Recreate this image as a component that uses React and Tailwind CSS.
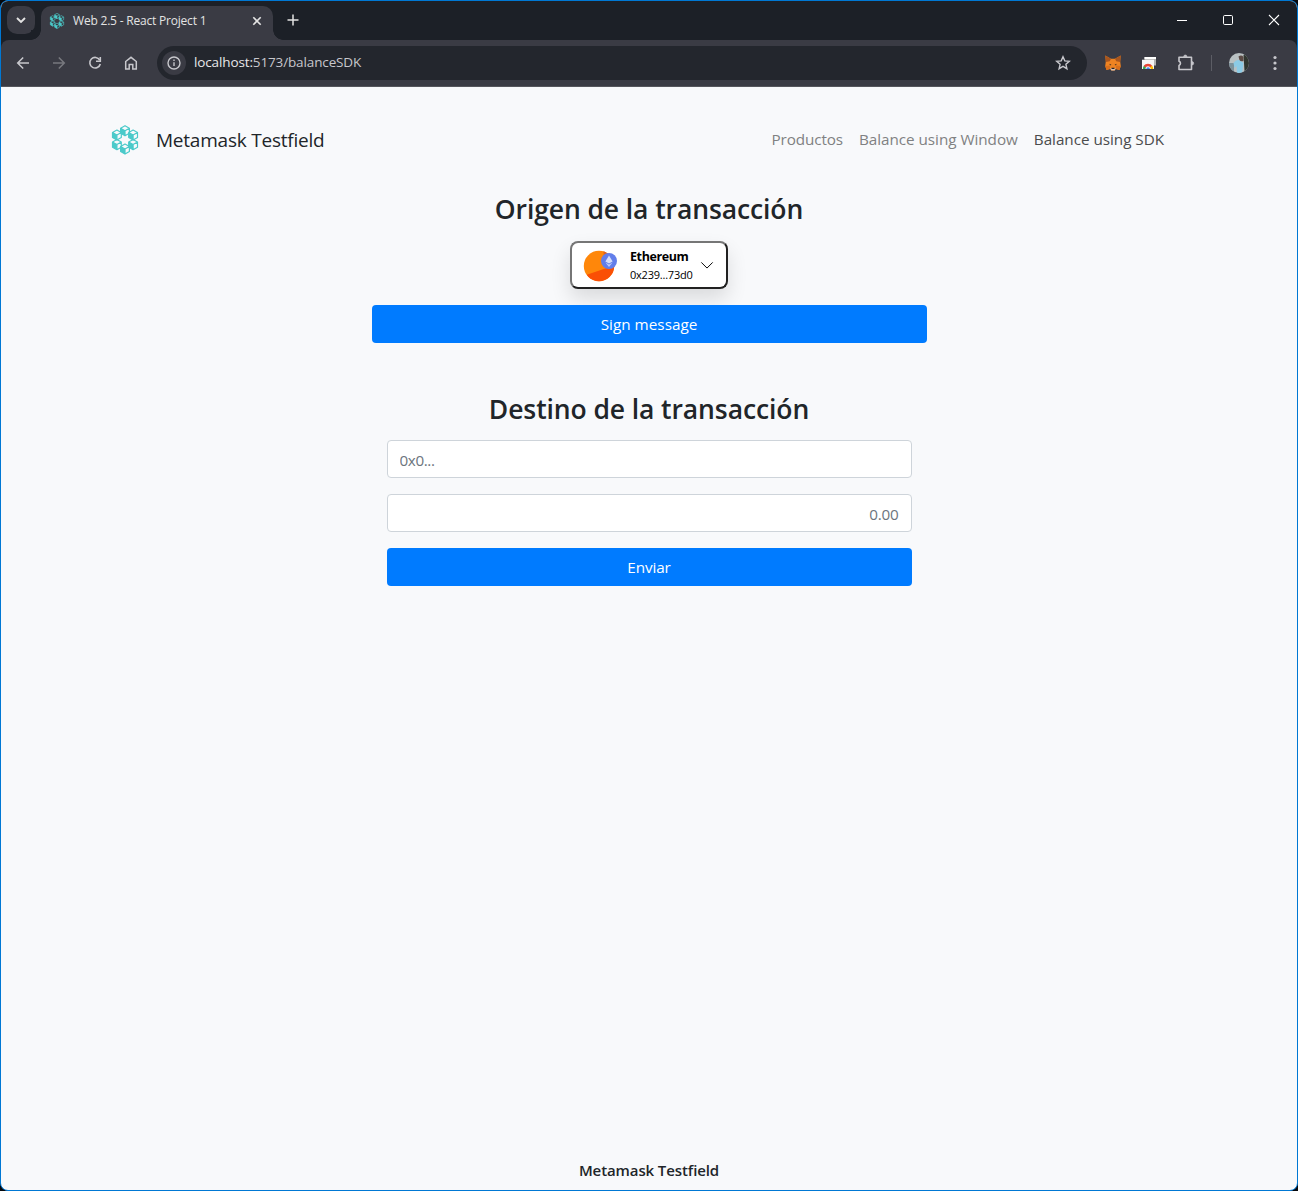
import React from "react";

const font = "font-['Open_Sans','Noto_Sans',sans-serif]";

function Cube({ x, y }) {
  return (
    <g transform={`translate(${x} ${y})`} strokeLinejoin="round">
      <path d="M-4.400-2.500 0 0V5.100L-4.400 2.600Z" fill="#4bcaca" />
      <path d="M0-5 4.400-2.500V2.600L0 5.100-4.400 2.600V-2.500ZM-4.400-2.500 0 0l4.400-2.500M0 0V5.100" fill="none" stroke="#4bcaca" strokeWidth="1.200" />
    </g>
  );
}

function CubesLogo({ className }) {
  return (
    <svg viewBox="0 0 28 30" className={className}>
      <Cube x={14} y={5.700} />
      <Cube x={5.900} y={10} />
      <Cube x={22.100} y={10} />
      <Cube x={5.900} y={19.600} />
      <Cube x={22.100} y={19.600} />
      <Cube x={14} y={24} />
    </svg>
  );
}

function Stroke({ d, className, width = 1.6 }) {
  return (
    <svg viewBox="0 0 16 16" className={className} fill="none" stroke="currentColor" strokeWidth={width}>
      <path d={d} />
    </svg>
  );
}

function Fox() {
  return (
    <svg viewBox="0 0 16 16" className="size-4">
      <path d="M.3.5 6 3.700h4L15.700.5l-.5 6 .6 4.500-1.300 4-3.500-1-1.500 1.500h-3L5 14l-3.500 1L.2 11l.6-4.500Z" fill="#ee8322" />
      <path d="M.3.5 6 3.700 4.800 6.300.8 7ZM15.700.5 10 3.700l1.200 2.600 4 .7Z" fill="#a9561e" />
      <path d="M.2 11 5 10.500 5 14l-3.500 1ZM15.800 11l-4.800-.5v3.500l3.500 1Z" fill="#d96f1c" />
      <path d="m3.800 8.800 2.500.6-.5 1ZM12.200 8.800l-2.500.6.5 1Z" fill="#3b2b25" />
      <path d="M5.500 13h5l-.8 2.500H6.300Z" fill="#d6c0b3" />
      <path d="M6.500 12.700h3v1.300h-3Z" fill="#2b2220" />
    </svg>
  );
}

function TitleBar() {
  return (
    <div className="flex h-[39px] shrink-0 items-stretch bg-[#1c2027] text-[#e3e3e3]">
      <div className="ml-[6px] mt-[5px] flex size-7 items-center justify-center rounded-[10px] bg-[#3a3b44]">
        <Stroke d="m4 6 4 4 4-4" className="size-4" width={1.9} />
      </div>
      <div className="relative ml-[6px] mt-[5px] flex w-[232px] items-center rounded-t-[10px] bg-[#3a3b44] pb-[5px]">
        <div className="absolute bottom-0 -left-[10px] size-[10px] bg-[radial-gradient(circle_at_0_0,#1c2027_9.5px,#3a3b44_10px)]" />
        <div className="absolute bottom-0 -right-[10px] size-[10px] bg-[radial-gradient(circle_at_100%_0,#1c2027_9.5px,#3a3b44_10px)]" />
        <CubesLogo className="ml-2 size-4" />
        <span className="ml-2 w-[176px] whitespace-nowrap text-[12px] tracking-[-0.2px]">Web 2.5 - React Project 1</span>
        <Stroke d="m4.300 4.300 7.400 7.400m0-7.400-7.400 7.400" className="size-4" />
      </div>
      <Stroke d="M8 2.500v11M2.500 8h11" className="ml-3 mt-[11px] size-4" width={1.5} />
      <div className="ml-auto mr-[15px] mt-[11px] flex gap-[30px] text-white">
        <Stroke d="M3 8.500h10" className="size-4" width={1} />
        <svg viewBox="0 0 16 16" className="size-4" fill="none" stroke="currentColor"><rect x="3.500" y="3.500" width="9" height="9" rx="1.200" /></svg>
        <Stroke d="m3 3 10 10m0-10L3 13" className="size-4" width={1.1} />
      </div>
    </div>
  );
}

function Toolbar() {
  return (
    <div className="bg-[#1c2027]">
      <div className="flex h-[47px] items-center rounded-t-[8px] border-b border-[#55565c] bg-[#3a3b44] text-[#c7c7cc]">
        <Stroke d="M14 8H3m5.200-5.500L2.700 8l5.500 5.500" className="ml-[14px] size-4" width={1.5} />
        <Stroke d="M2 8h11M7.800 2.500 13.300 8l-5.500 5.500" className="ml-5 size-4 text-[#77787e]" width={1.5} />
        <svg viewBox="0 0 16 16" className="ml-5 size-4" fill="none" stroke="currentColor" strokeWidth="1.600">
          <path d="M12.700 5A5.300 5.300 0 1 0 13.300 9" /><path d="M13.300 2v4.200H9" />
        </svg>
        <Stroke d="M2.700 14V6.500L8 2.300l5.300 4.200V14H9.800V9.500H6.200V14Z" className="ml-5 size-4" width={1.5} />
        <div className="ml-[18px] flex h-[34px] w-[930px] items-center rounded-full bg-[#23262d]">
          <div className="ml-[5px] flex size-6 items-center justify-center rounded-full bg-[#3a3b44]">
            <svg viewBox="0 0 16 16" className="size-4" fill="none" stroke="currentColor" strokeWidth="1.400">
              <circle cx="8" cy="8" r="6" /><path d="M8 7.200V11M8 4.600V6" />
            </svg>
          </div>
          <span className="ml-2 pb-px text-[13.5px] tracking-[-0.13px] text-[#c7c7cc]"><span className="text-[#e8e8ea]">localhost:</span>5173/balanceSDK</span>
          <Stroke d="m8 1.800 1.800 4.100 4.500.4-3.400 3 1 4.400L8 11.400l-3.900 2.300 1-4.400-3.400-3 4.500-.4Z" className="ml-auto mr-4 size-4" width={1.400} />
        </div>
        <div className="ml-[18px]"><Fox /></div>
        <svg viewBox="0 0 16 16" className="ml-5 size-4">
          <path d="M3.500 2H15v8.500H3.500Z" fill="#b4b3b2" /><path d="M3.500 2H15v2H3.500Z" fill="#fff" />
          <path d="M1 4.800h12V14H1Z" fill="#f5f5f5" />
          <g fill="none" strokeWidth="2.600">
            <path d="M3.200 14a3.900 3.900 0 0 1 1-2.800" stroke="#34a853" />
            <path d="M3.700 11.800a3.900 3.900 0 0 1 6.600 0" stroke="#ea4335" />
            <path d="M10 11.300a3.900 3.900 0 0 1 1 2.700" stroke="#fbbc04" />
          </g>
          <path d="M5.300 14a1.800 1.800 0 0 1 3.600 0Z" fill="#4285f4" />
        </svg>
        <svg viewBox="0 0 18 18" className="ml-5 size-[18px]" fill="none" stroke="currentColor" strokeWidth="1.600" strokeLinejoin="round">
          <path d="M2 3.200H14.500V15.500H2v-4a2.300 2.300 0 0 0 0-4.300Z" /><path d="M6.600 2.700a1.700 1.700 0 0 1 3.400 0ZM15 7.600a1.700 1.700 0 0 1 0 3.400Z" fill="currentColor" strokeWidth=".6" />
        </svg>
        <div className="ml-4 h-4 w-px bg-[#5c5d65]" />
        <svg viewBox="0 0 20 20" className="ml-[17px] size-5">
          <clipPath id="avatar"><circle cx="10" cy="10" r="10" /></clipPath>
          <g clipPath="url(#avatar)">
            <path d="M0 0h20v20H0Z" fill="#b9c1c3" /><path d="M14.500 2H20v16h-4.500Z" fill="#303630" /><path d="M0 10h5v10H0Z" fill="#7c929c" />
            <path d="M4.500 10q3-4 6.500-2.500l3.500 2.500-1.500 10H8l-.5-7-2 2Z" fill="#8bcbe6" /><path d="M9.500 3.500q3-2 5 .5v4q-3 1-4-1Z" fill="#5b4a45" />
          </g>
        </svg>
        <svg viewBox="0 0 16 16" className="ml-[18px] size-4" fill="currentColor"><circle cx="8" cy="2.500" r="1.600" /><circle cx="8" cy="8" r="1.600" /><circle cx="8" cy="13.500" r="1.600" /></svg>
      </div>
    </div>
  );
}

function WalletButton() {
  return (
    <button className="mx-auto mt-3 flex h-12 w-[158px] items-center rounded-[8px] border-2 border-t-[#767676] border-r-[#212121] border-b-[#212121] border-l-[#767676] bg-white text-black shadow-[0_10px_20px_rgba(0,0,0,0.12)]">
      <svg viewBox="0 0 36 34" className="ml-[11px] h-[34px] w-9 shrink-0">
        <clipPath id="account"><circle cx="16" cy="18" r="15.200" /></clipPath>
        <g clipPath="url(#account)"><path d="M0 0h36v34H0Z" fill="#ff870a" /><path d="M20 0h16v18L22 20Z" fill="#e2631c" /><path d="M0 28 36 16v18H0Z" fill="#fa4f05" /></g>
        <circle cx="26" cy="13" r="8" fill="#627eea" />
        <path d="m26 7.500 3.600 6L26 15.600l-3.600-2.100Z" fill="#d6defa" /><path d="m22.400 14.400 3.600 2.100 3.600-2.100L26 19Z" fill="#c0cbf7" />
      </svg>
      <span className="ml-[11px] w-[63px] whitespace-nowrap pt-[2px] text-left">
        <span className="block text-[12.5px] leading-[18px] font-bold tracking-[-0.4px]">Ethereum</span>
        <span className="block text-[11px] leading-[18px] font-medium tracking-[-0.22px]">0x239...73d0</span>
      </span>
      <Stroke d="m1.500 5 6.500 6.500L14.500 5" className="ml-[7px] size-[14px] shrink-0" width={1.1} />
    </button>
  );
}

export default function App() {
  return (
    <div className={`${font} h-[1191px] w-[1298px] bg-[#05080d]`}>
      <div className="flex h-full flex-col overflow-hidden rounded-[8px] border border-[#0078d4] bg-[#f8f9fb] text-[#212529]">
        <TitleBar />
        <Toolbar />
        <nav className="ml-[108px] mr-[133px] mt-[31px] flex h-11 shrink-0 items-center">
          <CubesLogo className="h-[30px] w-8" />
          <span className="ml-[15px] text-[19px] tracking-[-0.22px]">Metamask Testfield</span>
          <div className="ml-auto flex gap-4 pb-px text-[15.25px] tracking-[-0.03px] text-[#808182]">
            <a className="tracking-[-0.12px]">Productos</a><a>Balance using Window</a><a className="text-[#4b4c4d]">Balance using SDK</a>
          </div>
        </nav>
        <main className="mx-auto flex w-[555px] grow flex-col">
          <h3 className="mt-[30px] h-[37px] whitespace-nowrap text-center text-[26.5px] leading-[34px] font-semibold tracking-[-0.1px]">Origen de la transacción</h3>
          <WalletButton />
          <button className="mt-4 h-[38px] rounded-[4px] bg-[#007bff] pt-px text-[15.25px] tracking-[0.03px] text-white">Sign message</button>
          <h3 className="mt-[49px] whitespace-nowrap text-center text-[26.5px] leading-[34px] font-semibold tracking-[-0.1px]">Destino de la transacción</h3>
          <form className="mx-[15px] mt-[14px] flex flex-col gap-4 text-[15.25px]">
            <input placeholder="0x0..." className="h-[38px] rounded-[4px] border border-[#ced4da] bg-white px-3 pt-[2px] tracking-[-0.4px] placeholder:text-[#6c757d]" />
            <input placeholder="0.00" className="h-[38px] rounded-[4px] border border-[#ced4da] bg-white px-3 pt-[2px] text-right tracking-[-0.2px] placeholder:text-[#6c757d]" />
            <button type="button" className="h-[38px] rounded-[4px] bg-[#007bff] pt-px tracking-[-0.1px] text-white">Enviar</button>
          </form>
        </main>
        <footer className="mb-[8px] text-center text-[15px] leading-6 font-semibold tracking-[-0.1px]">Metamask Testfield</footer>
      </div>
    </div>
  );
}
